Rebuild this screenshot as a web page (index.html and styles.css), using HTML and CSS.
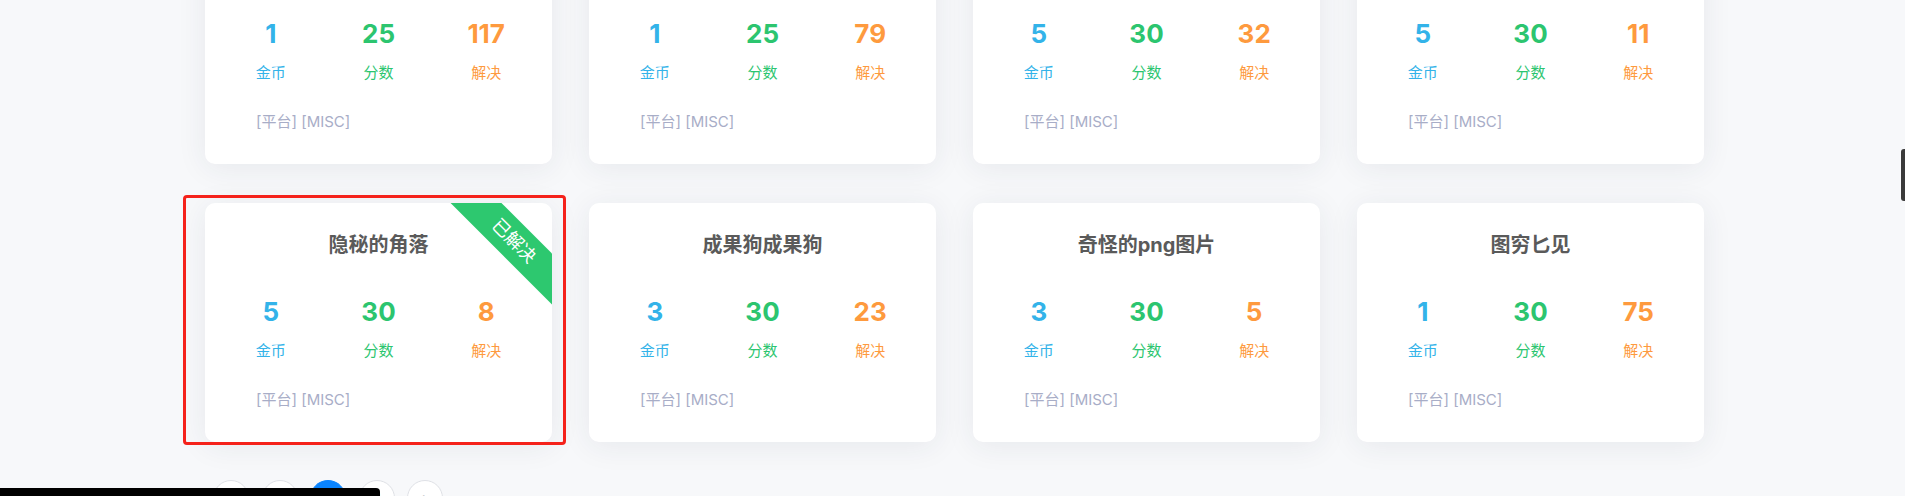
FILE: index.html
```html
<!DOCTYPE html>
<html lang="zh-CN">
<head>
<meta charset="utf-8">
<title>题目列表</title>
<link rel="stylesheet" href="styles.css">
</head>
<body>
<div class="page">
  <div class="grid">
    <div class="card">
      <h3 class="title">签到题</h3>
      <div class="stats">
        <div class="stat"><div class="num coin">1</div><div class="lbl coin">金币</div></div>
        <div class="stat"><div class="num score">25</div><div class="lbl score">分数</div></div>
        <div class="stat"><div class="num solve">117</div><div class="lbl solve">解决</div></div>
      </div>
      <div class="tags">[平台] [MISC]</div>
    </div>
    <div class="card">
      <h3 class="title">啊哒</h3>
      <div class="stats">
        <div class="stat"><div class="num coin">1</div><div class="lbl coin">金币</div></div>
        <div class="stat"><div class="num score">25</div><div class="lbl score">分数</div></div>
        <div class="stat"><div class="num solve">79</div><div class="lbl solve">解决</div></div>
      </div>
      <div class="tags">[平台] [MISC]</div>
    </div>
    <div class="card">
      <h3 class="title">被偷走的文件</h3>
      <div class="stats">
        <div class="stat"><div class="num coin">5</div><div class="lbl coin">金币</div></div>
        <div class="stat"><div class="num score">30</div><div class="lbl score">分数</div></div>
        <div class="stat"><div class="num solve">32</div><div class="lbl solve">解决</div></div>
      </div>
      <div class="tags">[平台] [MISC]</div>
    </div>
    <div class="card">
      <h3 class="title">神秘的二维码</h3>
      <div class="stats">
        <div class="stat"><div class="num coin">5</div><div class="lbl coin">金币</div></div>
        <div class="stat"><div class="num score">30</div><div class="lbl score">分数</div></div>
        <div class="stat"><div class="num solve">11</div><div class="lbl solve">解决</div></div>
      </div>
      <div class="tags">[平台] [MISC]</div>
    </div>

    <div class="card">
      <div class="ribbon">已解决</div>
      <h3 class="title">隐秘的角落</h3>
      <div class="stats">
        <div class="stat"><div class="num coin">5</div><div class="lbl coin">金币</div></div>
        <div class="stat"><div class="num score">30</div><div class="lbl score">分数</div></div>
        <div class="stat"><div class="num solve">8</div><div class="lbl solve">解决</div></div>
      </div>
      <div class="tags">[平台] [MISC]</div>
    </div>
    <div class="card">
      <h3 class="title">成果狗成果狗</h3>
      <div class="stats">
        <div class="stat"><div class="num coin">3</div><div class="lbl coin">金币</div></div>
        <div class="stat"><div class="num score">30</div><div class="lbl score">分数</div></div>
        <div class="stat"><div class="num solve">23</div><div class="lbl solve">解决</div></div>
      </div>
      <div class="tags">[平台] [MISC]</div>
    </div>
    <div class="card">
      <h3 class="title">奇怪的png图片</h3>
      <div class="stats">
        <div class="stat"><div class="num coin">3</div><div class="lbl coin">金币</div></div>
        <div class="stat"><div class="num score">30</div><div class="lbl score">分数</div></div>
        <div class="stat"><div class="num solve">5</div><div class="lbl solve">解决</div></div>
      </div>
      <div class="tags">[平台] [MISC]</div>
    </div>
    <div class="card">
      <h3 class="title">图穷匕见</h3>
      <div class="stats">
        <div class="stat"><div class="num coin">1</div><div class="lbl coin">金币</div></div>
        <div class="stat"><div class="num score">30</div><div class="lbl score">分数</div></div>
        <div class="stat"><div class="num solve">75</div><div class="lbl solve">解决</div></div>
      </div>
      <div class="tags">[平台] [MISC]</div>
    </div>
  </div>

  <div class="pager">
    <span class="pg">‹</span>
    <span class="pg">1</span>
    <span class="pg active">2</span>
    <span class="pg">3</span>
    <span class="pg">›</span>
  </div>
</div>

<div class="highlight"></div>
<div class="status-bar"></div>
<div class="side-handle"></div>
</body>
</html>
```

FILE: styles.css
```css
html, body {
  margin: 0;
  padding: 0;
}

body {
  background: #f7f8fa;
  font-family: Inter, "Noto Sans CJK SC", sans-serif;
  overflow: hidden;
  position: relative;
  height: 496px;
}

.page {
  padding-left: 205px;
  margin-top: -75px;
}

.grid {
  display: grid;
  grid-template-columns: repeat(4, 347px);
  column-gap: 37px;
  row-gap: 39px;
}

.card {
  position: relative;
  overflow: hidden;
  background: #fff;
  border-radius: 10px;
  box-shadow: 0 4px 30px rgba(40, 50, 80, 0.08);
  padding: 28px 12px 32px;
}

.title {
  margin: 0 0 37px;
  font-size: 20px;
  line-height: 28px;
  font-weight: 700;
  color: #5a5a5a;
  text-align: center;
}

.stats {
  display: flex;
}

.stat {
  flex: 1;
  text-align: center;
}

.num {
  font-size: 26px;
  line-height: 32px;
  font-weight: 700;
}

.lbl {
  margin-top: 13px;
  font-size: 15px;
  line-height: 20px;
}

.coin { color: #33b3e9; }
.score { color: #2cc56f; }
.solve { color: #fe9a3e; }

.tags {
  margin-top: 29px;
  padding-left: 39px;
  font-size: 15px;
  line-height: 20px;
  color: #a8adc7;
}

.ribbon {
  position: absolute;
  top: 38px;
  right: 38px;
  width: 170px;
  height: 36px;
  line-height: 36px;
  background: #2dc86f;
  color: #fff;
  font-size: 18px;
  text-align: center;
  transform: translate(50%, -50%) rotate(45deg);
}

.pager {
  display: flex;
  gap: 12.5px;
  margin-top: 38px;
  padding-left: 8px;
}

.pg {
  box-sizing: border-box;
  width: 36px;
  height: 36px;
  border-radius: 50%;
  border: 1px solid #dfe1e6;
  background: #fff;
  color: #9aa0a6;
  font-size: 14px;
  line-height: 34px;
  text-align: center;
}

.pg.active {
  background: #0a84ff;
  border-color: #0a84ff;
  color: #fff;
}

.highlight {
  position: absolute;
  left: 183px;
  top: 195px;
  width: 383px;
  height: 250px;
  box-sizing: border-box;
  border: 3px solid #f5221b;
  border-radius: 4px;
}

.status-bar {
  position: fixed;
  left: 0;
  bottom: 0;
  width: 380px;
  height: 8px;
  background: #000;
  border-top-right-radius: 4px;
}

.side-handle {
  position: fixed;
  right: -4px;
  top: 149px;
  width: 8px;
  height: 52px;
  background: #3a3a3a;
  border-radius: 3px;
}
```
